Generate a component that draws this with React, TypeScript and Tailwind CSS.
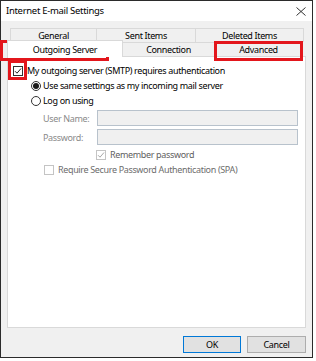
import type { ReactNode } from 'react'

function Check({ checked, disabled }: { checked?: boolean; disabled?: boolean }) {
  return <span className={`flex h-[10px] w-[10px] shrink-0 items-center justify-center border bg-white ${disabled ? 'border-[#c4c4c4]' : 'border-[#333333]'}`}>
    {checked && <svg width="8" height="8" viewBox="0 0 8 8" fill="none">
      <path d="M1 4.2 L3 6.2 L7 1.5" stroke={disabled ? '#a8a8a8' : '#222222'} strokeWidth="1" />
    </svg>}
  </span>
}

function Radio({ checked }: { checked?: boolean }) {
  return <span className="flex h-[10px] w-[10px] shrink-0 items-center justify-center rounded-full border border-[#333333] bg-white">
    {checked && <span className="h-[6px] w-[6px] rounded-full bg-[#1a1a1a]" />}
  </span>
}

function Tab({ children, w, selected }: { children: ReactNode; w: string; selected?: boolean }) {
  return <div className={`-ml-px flex items-center justify-center border border-b-0 border-[#d9d9d9] first:ml-0 ${w} ${selected ? 'relative z-10 mb-[-1px] h-[17px] bg-white' : 'h-[14px] bg-[#f0f0f0]'}`}>
    {children}
  </div>
}

export default function App() {
  return <div className="relative h-[361px] w-[316px] bg-white font-['Noto_Sans',sans-serif] text-[9px] leading-none tracking-[-0.35px] text-black">
    <div className="flex h-[358px] w-[313px] flex-col border border-[#2b2b2b] bg-[#f0f0f0]">
      <div className="flex h-[20px] shrink-0 items-center justify-between bg-white pl-[5px] pr-[6px]">
        <span className="text-[9.5px] tracking-[-0.3px]">Internet E-mail Settings</span>
        <svg width="10" height="9" viewBox="0 0 10 9" fill="none">
          <path d="M0.5 0.5 L9.5 8.5 M9.5 0.5 L0.5 8.5" stroke="#333333" strokeWidth="1" />
        </svg>
      </div>
      <div className="flex flex-1 flex-col px-[6px] pt-[7px]">
        <div className="ml-[3px] flex">
          <Tab w="w-[87px]">General</Tab>
          <Tab w="w-[100px]">Sent Items</Tab>
          <Tab w="w-[109px]">Deleted Items</Tab>
        </div>
        <div className="flex h-[14px] items-end">
          <Tab w="w-[116px]" selected>Outgoing Server</Tab>
          <Tab w="w-[93px]">Connection</Tab>
          <Tab w="w-[89px]">Advanced</Tab>
        </div>
        <div className="flex h-[272px] flex-col border border-[#d9d9d9] bg-white px-[5px] pt-[6px]">
          <div className="flex h-[15px] items-center gap-[4px]">
            <Check checked />
            <span>My outgoing server (SMTP) requires authentication</span>
          </div>
          <div className="ml-[18px] flex h-[15px] items-center gap-[2px]">
            <Radio checked />
            <span>Use same settings as my incoming mail server</span>
          </div>
          <div className="ml-[18px] flex h-[15px] items-center gap-[2px]">
            <Radio />
            <span>Log on using</span>
          </div>
          <div className="mt-[2px] flex h-[16px] items-center">
            <span className="ml-[30px] w-[54px] text-[#8a8a8a]">User Name:</span>
            <span className="h-[16px] w-[201px] border border-[#b8c2cc] bg-[#f0f0f0]" />
          </div>
          <div className="mt-[3px] flex h-[16px] items-center">
            <span className="ml-[30px] w-[54px] text-[#8a8a8a]">Password:</span>
            <span className="h-[16px] w-[201px] border border-[#b8c2cc] bg-[#f0f0f0]" />
          </div>
          <div className="ml-[83px] mt-[4px] flex h-[11px] items-center gap-[4px] text-[#5f5f5f]">
            <Check checked disabled />
            <span>Remember password</span>
          </div>
          <div className="ml-[31px] mt-[4px] flex h-[11px] items-center gap-[4px] text-[#6d6d6d]">
            <Check disabled />
            <span>Require Secure Password Authentication (SPA)</span>
          </div>
        </div>
        <div className="flex justify-end gap-[6px] pt-[8px]">
          <button className="flex h-[17px] w-[58px] items-center justify-center border border-[#0078d7] bg-[#e1e1e1]">OK</button>
          <button className="flex h-[17px] w-[59px] items-center justify-center border border-[#adadad] bg-[#e1e1e1]">Cancel</button>
        </div>
      </div>
    </div>
    <div className="absolute left-0 top-[40px] h-[21px] w-[109px] border-[3px] border-[#e3161c]" />
    <div className="absolute left-[214px] top-[41px] h-[20px] w-[89px] border-[3px] border-[#e3161c]" />
    <div className="absolute left-[8px] top-[60px] h-[20px] w-[19px] border-[3px] border-[#e3161c]" />
  </div>
}
